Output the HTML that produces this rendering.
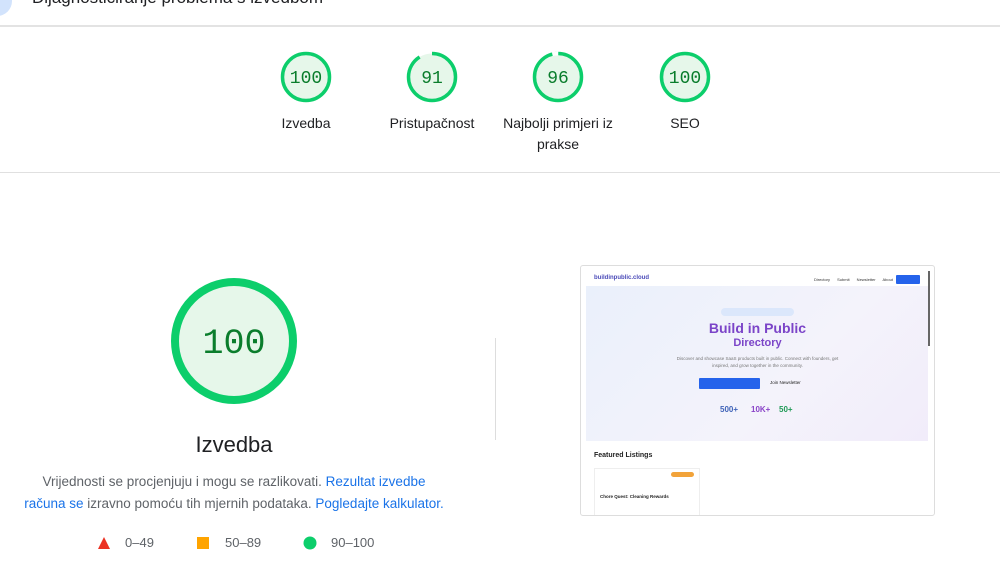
<!DOCTYPE html><html><head><style>
body{margin:0;width:1000px;height:572px;overflow:hidden;background:#fff;font-family:"Liberation Sans",sans-serif;color:#202124;position:relative}
.a{position:absolute}
.lbl{font-size:14px;text-align:center;width:130px;line-height:21px}
</style></head><body>
<div class="a" style="left:-18px;top:-14px;width:30px;height:30px;border-radius:50%;background:#d2e3fc"></div>
<div class="a" style="left:32px;top:-12px;font-size:17px">Dijagnosticiranje problema s izvedbom</div>
<div class="a" style="left:0;top:25px;width:1000px;height:2px;background:#e3e3e3"></div>
<div class="a" style="left:0;top:172px;width:1000px;height:1px;background:#e0e0e0"></div>
<svg class="a" style="left:0;top:0" width="1000" height="572">
<g fill="#e6f7ea" stroke="#0cce6b" stroke-width="3.5">
<circle cx="306" cy="77" r="23.5"/><circle cx="558" cy="77" r="23.5"/><circle cx="685" cy="77" r="23.5"/>
<circle cx="432" cy="77" r="23.5" stroke-dasharray="134.4 147.7" transform="rotate(-90 432 77)"/>
<circle cx="234" cy="341" r="59" stroke-width="8"/>
</g>
<circle cx="558" cy="77" r="23.5" fill="none" stroke="#fff" stroke-width="4" stroke-dasharray="6 142" transform="rotate(-104 558 77)"/>
<g font-family="Liberation Mono,monospace" fill="#0a7d2c" text-anchor="middle" font-size="18">
<text x="306" y="83">100</text><text x="432" y="83">91</text><text x="558" y="83">96</text><text x="685" y="83">100</text>
<text x="234" y="353" font-size="35">100</text></g>
<polygon points="104,537 110,549 98,549" fill="#eb3223"/>
<rect x="197" y="537" width="12" height="12" fill="#ffa400"/>
<circle cx="310" cy="543" r="6.5" fill="#0cce6b"/>
</svg>
<div class="a lbl" style="left:241px;top:113px">Izvedba</div>
<div class="a lbl" style="left:367px;top:113px">Pristupačnost</div>
<div class="a lbl" style="left:493px;top:113px">Najbolji primjeri iz prakse</div>
<div class="a lbl" style="left:620px;top:113px">SEO</div>
<div class="a" style="left:0;top:432px;width:468px;text-align:center;font-size:22px">Izvedba</div>
<div class="a" style="left:22px;top:471px;width:424px;text-align:center;font-size:13.5px;line-height:21.5px;color:#5f6368">Vrijednosti se procjenjuju i mogu se razlikovati. <span style="color:#1a73e8">Rezultat izvedbe računa se</span> izravno pomoću tih mjernih podataka. <span style="color:#1a73e8">Pogledajte kalkulator.</span></div>
<div class="a" style="left:125px;top:535px;font-size:13px;color:#5f6368">0–49</div>
<div class="a" style="left:225px;top:535px;font-size:13px;color:#5f6368">50–89</div>
<div class="a" style="left:331px;top:535px;font-size:13px;color:#5f6368">90–100</div>
<div class="a" style="left:495px;top:338px;width:1px;height:102px;background:#ddd"></div>
<div class="a" style="left:580px;top:265px;width:353px;height:249px;border:1px solid #ddd;border-radius:3px;overflow:hidden;background:#fff">
 <div class="a" style="left:5px;top:20px;width:342px;height:155px;background:linear-gradient(135deg,#eaf0fb,#f4f3fb 60%,#f1ecfa)"></div>
 <div class="a" style="left:13px;top:9px;font-size:6px;color:#4a4ab8;font-weight:bold">buildinpublic.cloud</div>
 <div class="a" style="left:233px;top:11px;font-size:4px;color:#333;word-spacing:6px">Directory Submit Newsletter About</div>
 <div class="a" style="left:315px;top:9px;width:24px;height:9px;background:#2563eb;border-radius:1px"></div>
 <div class="a" style="left:140px;top:42px;width:73px;height:8px;background:#dbe7fb;border-radius:4px"></div>
 <div class="a" style="left:0;top:54px;width:353px;text-align:center;font-size:14px;font-weight:bold;color:#7b44c8">Build in Public</div>
 <div class="a" style="left:0;top:71px;width:353px;text-align:center;font-size:11px;font-weight:bold;color:#7b44c8">Directory</div>
 <div class="a" style="left:90px;top:89px;width:173px;text-align:center;font-size:4.5px;color:#777;line-height:7px">Discover and showcase SaaS products built in public. Connect with founders, get inspired, and grow together in the community.</div>
 <div class="a" style="left:118px;top:112px;width:61px;height:11px;background:#2563eb;border-radius:1px"></div>
 <div class="a" style="left:189px;top:114px;font-size:4.5px;color:#222">Join Newsletter</div>
 <div class="a" style="left:139px;top:139px;font-size:8px;font-weight:bold;color:#3f63b8">500+</div>
 <div class="a" style="left:170px;top:139px;font-size:8px;font-weight:bold;color:#8a44c8">10K+</div>
 <div class="a" style="left:198px;top:139px;font-size:8px;font-weight:bold;color:#1f9a56">50+</div>
 <div class="a" style="left:13px;top:186px;font-size:7px;font-weight:bold;color:#222">Featured Listings</div>
 <div class="a" style="left:13px;top:202px;width:104px;height:46px;border:1px solid #eee"></div>
 <div class="a" style="left:90px;top:206px;width:23px;height:5px;background:#f2a33a;border-radius:3px"></div>
 <div class="a" style="left:19px;top:228px;font-size:4.5px;font-weight:bold;color:#222">Chore Quest: Cleaning Rewards</div>
 <div class="a" style="left:347px;top:5px;width:2px;height:75px;background:#666"></div>
</div>
</body></html>
